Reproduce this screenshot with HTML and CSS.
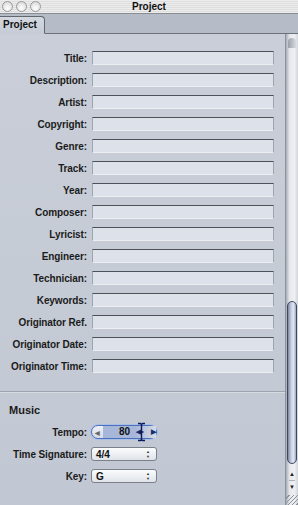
FILE: index.html
```html
<!DOCTYPE html>
<html lang="en">
<head>
    <meta charset="UTF-8">
    <title>Project</title>
    <link rel="stylesheet" href="styles.css">
</head>
<body>
    <div class="window">
        <div class="titlebar">
            <div class="lights">
                <span class="light"></span>
                <span class="light"></span>
                <span class="light"></span>
            </div>
            <div class="window-title">Project</div>
        </div>

        <div class="tabbar">
            <div class="tab">Project</div>
        </div>

        <div class="body">
            <div class="panel">
                <div class="form">
                    <label>Title:</label><div class="field"></div>
                    <label>Description:</label><div class="field"></div>
                    <label>Artist:</label><div class="field"></div>
                    <label>Copyright:</label><div class="field"></div>
                    <label>Genre:</label><div class="field"></div>
                    <label>Track:</label><div class="field"></div>
                    <label>Year:</label><div class="field"></div>
                    <label>Composer:</label><div class="field"></div>
                    <label>Lyricist:</label><div class="field"></div>
                    <label>Engineer:</label><div class="field"></div>
                    <label>Technician:</label><div class="field"></div>
                    <label>Keywords:</label><div class="field"></div>
                    <label>Originator Ref.</label><div class="field"></div>
                    <label>Originator Date:</label><div class="field"></div>
                    <label>Originator Time:</label><div class="field"></div>
                </div>

                <div class="divider"></div>

                <div class="music">
                    <h3>Music</h3>
                    <div class="form">
                        <label>Tempo:</label>
                        <div class="tempo">
                            <span class="tempo-left">&#9664;</span>
                            <span class="tempo-value">80</span>
                            <span class="tempo-arrows">&#9664;<i></i>&#9654;</span>
                            <svg class="ibeam" width="9" height="20" viewBox="0 0 9 20">
                                <path d="M1 1.5h2.5l1 1 1-1H8M1 18.5h2.5l1-1 1 1H8M4.5 2.5v15M2.5 10h4" stroke="#0b1a5c" stroke-width="1.4" fill="none"/>
                            </svg>
                        </div>

                        <label>Time Signature:</label>
                        <div class="popup"><span>4/4</span><span class="updown">&#9650;<br>&#9660;</span></div>

                        <label>Key:</label>
                        <div class="popup"><span>G</span><span class="updown">&#9650;<br>&#9660;</span></div>
                    </div>
                </div>
            </div>

            <div class="scrollbar">
                <div class="track-cap"></div>
                <div class="track">
                    <div class="thumb"></div>
                </div>
                <div class="arrows">
                    <span>&#9650;</span>
                    <span>&#9660;</span>
                </div>
                <div class="grip"></div>
            </div>
        </div>
    </div>
</body>
</html>
```

FILE: styles.css
```css
body {
    margin: 0;
    font-family: "Liberation Sans", Arial, sans-serif;
    background-color: #c5cbd5;
}

.window {
    width: 298px;
    height: 505px;
    display: flex;
    flex-direction: column;
    overflow: hidden;
}

/* title bar */

.titlebar {
    height: 13px;
    position: relative;
    background: repeating-linear-gradient(#ececec 0, #ececec 1px, #dedede 1px, #dedede 2px);
    border-bottom: 1px solid #8a8d92;
    text-align: center;
}

.lights {
    position: absolute;
    left: 2px;
    top: 1px;
    display: flex;
    gap: 3px;
}

.light {
    width: 9px;
    height: 9px;
    border-radius: 50%;
    border: 1px solid #9a9a9a;
    background: radial-gradient(circle at 50% 70%, #ffffff, #d2d2d2);
}

.window-title {
    font-size: 10px;
    font-weight: bold;
    line-height: 13px;
    color: #111;
}

/* tabs */

.tabbar {
    height: 19px;
    background-color: #b6bcc7;
    border-bottom: 1px solid #6c7079;
    display: flex;
    align-items: flex-end;
}

.tab {
    width: 41px;
    height: 16px;
    margin-bottom: -1px;
    padding-left: 3px;
    background: linear-gradient(#d4d8df, #c6ccd6);
    border: 1px solid #62666e;
    border-left: none;
    border-bottom: 1px solid #c6ccd6;
    border-top-right-radius: 4px;
    font-size: 10px;
    font-weight: bold;
    line-height: 16px;
    color: #111;
}

/* content */

.body {
    flex: 1;
    display: flex;
}

.panel {
    flex: 1;
    padding-top: 17px;
    background: linear-gradient(#c9ced8, #c2c8d3);
}

.form {
    display: grid;
    grid-template-columns: 87px 182px;
    grid-auto-rows: 14px;
    row-gap: 8px;
    column-gap: 5px;
}

.form label {
    font-size: 10px;
    font-weight: bold;
    line-height: 15px;
    text-align: right;
    color: #1b1b1b;
    white-space: nowrap;
    letter-spacing: -0.1px;
}

.field {
    box-sizing: border-box;
    background-color: #dde2ea;
    border: 1px solid #9fa5ae;
    border-top: 1px solid #4d5158;
    border-bottom: 1px solid #eceef2;
}

.divider {
    margin-top: 18px;
    height: 1px;
    background-color: #9ea3ad;
    border-bottom: 1px solid #d6dae1;
}

.music {
    padding-top: 10px;
}

.music h3 {
    margin: 0 0 8px 9px;
    font-size: 11px;
    line-height: 14px;
    color: #1b1b1b;
}

.music .form {
    grid-template-columns: 87px 66px;
    column-gap: 4px;
}

/* tempo slider */

.tempo {
    position: relative;
    box-sizing: border-box;
    display: flex;
    align-items: center;
    border: 1px solid #4d70bb;
    border-radius: 7px;
    box-shadow: 0 0 0 1px #a9bfe8;
    background: linear-gradient(#eef1f6, #d6dbe4);
    font-size: 10px;
    font-weight: bold;
    color: #111;
}

.tempo-left {
    width: 12px;
    text-align: center;
    font-size: 6px;
    color: #666;
}

.tempo-value {
    width: 30px;
    height: 12px;
    line-height: 12px;
    padding-right: 5px;
    text-align: right;
    background-color: #a7b7d9;
}

.tempo-arrows {
    display: flex;
    align-items: center;
    gap: 5px;
    padding-left: 1px;
    font-size: 7px;
    color: #1c2c6e;
    background: linear-gradient(90deg, #a7b7d9, #d6dbe4);
    height: 12px;
}

.ibeam {
    position: absolute;
    left: 45px;
    top: -4px;
}

/* popups */

.popup {
    box-sizing: border-box;
    display: flex;
    justify-content: space-between;
    align-items: center;
    padding: 0 6px 0 4px;
    border: 1px solid #7b8089;
    border-radius: 3px;
    background: linear-gradient(#fbfcfd, #dfe3e9);
    font-size: 10px;
    font-weight: bold;
    color: #111;
}

.updown {
    font-size: 4px;
    line-height: 5px;
    color: #333;
}

/* scrollbar */

.scrollbar {
    width: 12px;
    display: flex;
    flex-direction: column;
    background: linear-gradient(90deg, #a8adb6, #e6e8ec 30%, #eef0f3 70%, #d0d4da);
    border-left: 1px solid #8d929a;
}

.track-cap {
    height: 10px;
    margin: 4px 2px 0;
    border-radius: 5px 5px 0 0;
    background: linear-gradient(90deg, #9aa0a9, #d7dadf);
}

.track {
    flex: 1;
    display: flex;
    flex-direction: column;
    justify-content: flex-end;
}

.thumb {
    height: 163px;
    margin: 0 1px;
    box-sizing: border-box;
    border: 1px solid #3f4863;
    border-radius: 5px;
    background: linear-gradient(90deg, #7b86a2, #c9d1e2 40%, #dfe5f0 70%, #9aa5c0);
}

.arrows {
    display: flex;
    flex-direction: column;
    align-items: center;
    padding: 4px 0 2px;
    font-size: 6px;
    line-height: 12px;
    color: #222;
}

.arrows span + span {
    border-top: 1px solid #aab0b8;
}

.grip {
    height: 10px;
    background: repeating-linear-gradient(135deg, transparent 0, transparent 2px, #8e939b 2px, #8e939b 3px);
}
```
